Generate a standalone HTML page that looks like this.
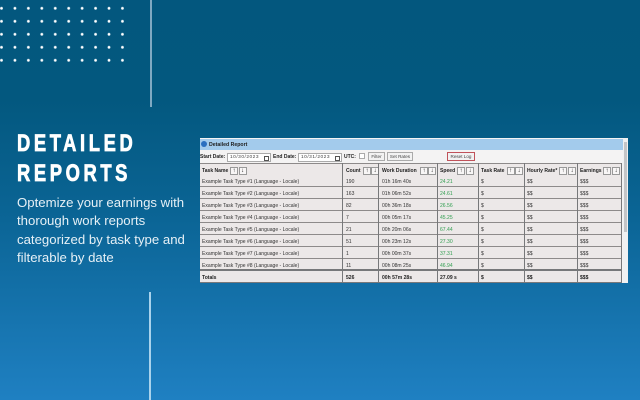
<!DOCTYPE html>
<html><head><meta charset="utf-8">
<style>
html,body{margin:0;padding:0}
body{width:640px;height:400px;overflow:hidden;position:relative;font-family:"Liberation Sans",sans-serif;background:linear-gradient(180deg,#03577e 0%,#03587f 25%,#0b6596 55%,#1f80c2 100%)}
.dots{position:absolute;left:0;top:0;width:130px;height:66px;background-image:radial-gradient(circle at 1.5px 1.5px,#fff 1.1px,rgba(255,255,255,0) 1.7px);background-size:13.45px 13px;background-position:0 6.8px}
.v{position:absolute;width:2px;background:#7fa9c2}
.h{position:absolute;left:17px;color:#fff;font-weight:700;font-size:24.5px;letter-spacing:4.8px;line-height:30px;white-space:nowrap;-webkit-text-stroke:.8px #fff;transform:scaleX(.75);transform-origin:left center}
.p{position:absolute;left:17px;top:194px;color:#e6f0f6;font-size:13.2px;line-height:18.3px;white-space:nowrap}
#s{position:absolute;left:200px;top:138px;width:428px;height:145px;background:#f4f3f3;overflow:hidden;filter:blur(.35px);color:#444;font-size:5px}
#s div{position:absolute;white-space:nowrap}
.t{left:0;top:1px;width:423px;height:11px;background:#a3cbec}
.tt{left:9px;top:3.5px;font-weight:700;font-size:5.2px;color:#222}
.ic{left:1px;top:3px;width:6px;height:6px;border-radius:50%;background:#2a6fc0}
.sb{left:423px;top:0;width:5px;height:145px;background:#f0f1f2}
.th{left:423.5px;top:4px;width:3.5px;height:90px;background:#c4c5c7}
.lb{top:15.5px;font-weight:700;color:#222;font-size:5px}
.inp{top:15px;height:7px;width:42px;background:#fff;border:.5px solid #aaa;font-size:4.8px;color:#444;line-height:8px;text-indent:2px;letter-spacing:.5px}
.cal{top:1.5px;left:36px;width:3px;height:3px;border:.5px solid #555;background:#fff}
.btn{top:14px;height:7px;background:#f2f2f2;border:.5px solid #aaa;font-size:4.6px;color:#444;line-height:7px;text-align:center}
.r{left:0;width:422px;height:11px;background:#ece8e8;border-bottom:1px solid #8d8a8a}
.c{top:3.6px;font-size:5.05px;line-height:6px;color:#333}
.g{color:#2f9e4f}
.b{font-weight:700;color:#222}
.col{width:1px;background:#77787a;top:25px;height:119px}
.a{top:2.5px;width:6px;height:6px;background:#f8f6f6;border:.5px solid #999;font-size:6px;line-height:6px;text-align:center;color:#111;font-weight:700}
</style></head><body>
<div class="dots"></div>
<div class="v" style="left:150px;top:0;height:107px"></div>
<div class="v" style="left:149px;top:292px;height:108px;background:#a9d3ec"></div>
<div class="h" style="top:129px">DETAILED</div>
<div class="h" style="top:159px">REPORTS</div>
<div class="p">Optemize your earnings with<br>thorough work reports<br>categorized by task type and<br>filterable by date</div>
<div id="s">
<div class="t"></div><div class="ic"></div><div class="tt">Detailed Report</div>
<div class="sb"></div><div class="th"></div>
<div class="lb" style="left:0">Start Date:</div><div class="inp" style="left:27px">10/30/2023<div class="cal"></div></div>
<div class="lb" style="left:73px">End Date:</div><div class="inp" style="left:98px">10/31/2023<div class="cal"></div></div>
<div class="lb" style="left:144px">UTC:</div><div class="btn" style="left:159px;top:15px;width:4px;height:4px;background:#fff"></div>
<div class="btn" style="left:168px;width:15px">Filter</div>
<div class="btn" style="left:187px;width:24px">Set Rates</div>
<div class="btn" style="left:247px;width:26px;border:.7px solid #c0525a">Reset Log</div>

<div class="r" style="top:25px;height:11px;border-top:1px solid #8d8a8a"><div class="c b" style="left:2px">Task Name</div><div class="a" style="left:30px">↑</div><div class="a" style="left:38.5px">↓</div><div class="c b" style="left:146px">Count</div><div class="a" style="left:163px">↑</div><div class="a" style="left:171px">↓</div><div class="c b" style="left:182px">Work Duration</div><div class="a" style="left:220px">↑</div><div class="a" style="left:228px">↓</div><div class="c b" style="left:240px">Speed</div><div class="a" style="left:257px">↑</div><div class="a" style="left:266px">↓</div><div class="c b" style="left:281px">Task Rate</div><div class="a" style="left:306.5px">↑</div><div class="a" style="left:315px">↓</div><div class="c b" style="left:327px">Hourly Rate*</div><div class="a" style="left:359px">↑</div><div class="a" style="left:368px">↓</div><div class="c b" style="left:380px">Earnings</div><div class="a" style="left:403px">↑</div><div class="a" style="left:412px">↓</div></div>

<div class="r" style="top:37px"><div class="c" style="left:2px">Example Task Type #1 (Language - Locale)</div><div class="c" style="left:146px">190</div><div class="c" style="left:182px">01h 16m 40s</div><div class="c g" style="left:240px">24.21</div><div class="c" style="left:281px">$</div><div class="c" style="left:327px">$$</div><div class="c" style="left:380px">$$$</div></div>
<div class="r" style="top:49px"><div class="c" style="left:2px">Example Task Type #2 (Language - Locale)</div><div class="c" style="left:146px">163</div><div class="c" style="left:182px">01h 06m 52s</div><div class="c g" style="left:240px">24.61</div><div class="c" style="left:281px">$</div><div class="c" style="left:327px">$$</div><div class="c" style="left:380px">$$$</div></div>
<div class="r" style="top:61px"><div class="c" style="left:2px">Example Task Type #3 (Language - Locale)</div><div class="c" style="left:146px">82</div><div class="c" style="left:182px">00h 36m 18s</div><div class="c g" style="left:240px">26.56</div><div class="c" style="left:281px">$</div><div class="c" style="left:327px">$$</div><div class="c" style="left:380px">$$$</div></div>
<div class="r" style="top:73px"><div class="c" style="left:2px">Example Task Type #4 (Language - Locale)</div><div class="c" style="left:146px">7</div><div class="c" style="left:182px">00h 05m 17s</div><div class="c g" style="left:240px">45.25</div><div class="c" style="left:281px">$</div><div class="c" style="left:327px">$$</div><div class="c" style="left:380px">$$$</div></div>
<div class="r" style="top:85px"><div class="c" style="left:2px">Example Task Type #5 (Language - Locale)</div><div class="c" style="left:146px">21</div><div class="c" style="left:182px">00h 20m 06s</div><div class="c g" style="left:240px">67.44</div><div class="c" style="left:281px">$</div><div class="c" style="left:327px">$$</div><div class="c" style="left:380px">$$$</div></div>
<div class="r" style="top:97px"><div class="c" style="left:2px">Example Task Type #6 (Language - Locale)</div><div class="c" style="left:146px">51</div><div class="c" style="left:182px">00h 23m 12s</div><div class="c g" style="left:240px">27.30</div><div class="c" style="left:281px">$</div><div class="c" style="left:327px">$$</div><div class="c" style="left:380px">$$$</div></div>
<div class="r" style="top:109px"><div class="c" style="left:2px">Example Task Type #7 (Language - Locale)</div><div class="c" style="left:146px">1</div><div class="c" style="left:182px">00h 00m 37s</div><div class="c g" style="left:240px">37.31</div><div class="c" style="left:281px">$</div><div class="c" style="left:327px">$$</div><div class="c" style="left:380px">$$$</div></div>
<div class="r" style="top:121px;border-bottom:2px solid #77787a;height:10px"><div class="c" style="left:2px">Example Task Type #8 (Language - Locale)</div><div class="c" style="left:146px">11</div><div class="c" style="left:182px">00h 08m 25s</div><div class="c g" style="left:240px">46.94</div><div class="c" style="left:281px">$</div><div class="c" style="left:327px">$$</div><div class="c" style="left:380px">$$$</div></div>
<div class="r" style="top:133px;height:11px;border-bottom:1px solid #77787a"><div class="c b" style="left:2px">Totals</div><div class="c b" style="left:146px">526</div><div class="c b" style="left:182px">00h 57m 28s</div><div class="c g b" style="left:240px">27.09 s</div><div class="c b" style="left:281px">$</div><div class="c b" style="left:327px">$$</div><div class="c b" style="left:380px">$$$</div></div>

<div class="col" style="left:142px"></div>
<div class="col" style="left:178px"></div>
<div class="col" style="left:237px"></div>
<div class="col" style="left:278px"></div>
<div class="col" style="left:324px"></div>
<div class="col" style="left:377px"></div>
<div class="col" style="left:421px"></div>
</div>
</body></html>
